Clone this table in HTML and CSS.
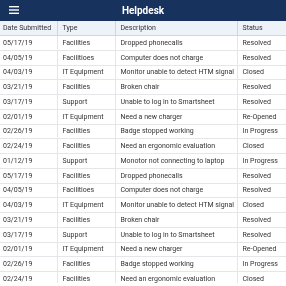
FILE: index.html
```html
<!DOCTYPE html>
<html>
<head>
<meta charset="utf-8">
<link rel="stylesheet" href="styles.css">
</head>
<body>
<div class="app">
  <header class="topbar">
    <span class="menu"><svg width="10" height="8" viewBox="0 0 10 8"><rect x="0" y="0" width="10" height="1.4" fill="#fff"/><rect x="0" y="3.3" width="10" height="1.4" fill="#fff"/><rect x="0" y="6.6" width="10" height="1.4" fill="#fff"/></svg></span>
    <span class="title">Helpdesk</span>
  </header>
  <table class="grid">
    <colgroup><col class="c1"><col class="c2"><col class="c3"><col class="c4"></colgroup>
    <thead>
      <tr><th>Date Submitted</th><th>Type</th><th>Description</th><th>Status</th></tr>
    </thead>
    <tbody>
      <tr><td>05/17/19</td><td>Facilities</td><td>Dropped phonecalls</td><td>Resolved</td></tr>
      <tr><td>04/05/19</td><td>Facilitioes</td><td>Computer does not charge</td><td>Resolved</td></tr>
      <tr><td>04/03/19</td><td>IT Equipment</td><td>Monitor unable to detect HTM signal</td><td>Closed</td></tr>
      <tr><td>03/21/19</td><td>Facilities</td><td>Broken chair</td><td>Resolved</td></tr>
      <tr><td>03/17/19</td><td>Support</td><td>Unable to log in to Smartsheet</td><td>Resolved</td></tr>
      <tr><td>02/01/19</td><td>IT Equipment</td><td>Need a new charger</td><td>Re-Opened</td></tr>
      <tr><td>02/26/19</td><td>Facilities</td><td>Badge stopped working</td><td>In Progress</td></tr>
      <tr><td>02/24/19</td><td>Facilities</td><td>Need an ergonomic evaluation</td><td>Closed</td></tr>
      <tr><td>01/12/19</td><td>Support</td><td>Monotor not connecting to laptop</td><td>In Progress</td></tr>
      <tr><td>05/17/19</td><td>Facilities</td><td>Dropped phonecalls</td><td>Resolved</td></tr>
      <tr><td>04/05/19</td><td>Facilitioes</td><td>Computer does not charge</td><td>Resolved</td></tr>
      <tr><td>04/03/19</td><td>IT Equipment</td><td>Monitor unable to detect HTM signal</td><td>Closed</td></tr>
      <tr><td>03/21/19</td><td>Facilities</td><td>Broken chair</td><td>Resolved</td></tr>
      <tr><td>03/17/19</td><td>Support</td><td>Unable to log in to Smartsheet</td><td>Resolved</td></tr>
      <tr><td>02/01/19</td><td>IT Equipment</td><td>Need a new charger</td><td>Re-Opened</td></tr>
      <tr><td>02/26/19</td><td>Facilities</td><td>Badge stopped working</td><td>In Progress</td></tr>
      <tr><td>02/24/19</td><td>Facilities</td><td>Need an ergonomic evaluation</td><td>Closed</td></tr>
    </tbody>
  </table>
</div>
</body>
</html>
```
FILE: styles.css
```css
html, body { margin: 0; padding: 0; background: #fff; }
body { font-family: Roboto, "Liberation Sans", sans-serif; color: #333333; overflow: hidden; -webkit-font-smoothing: antialiased; }
.app { width: 286px; height: 283px; overflow: hidden; will-change: transform; background: #fff; }
.topbar {
  height: 21px; background: #17335d; display: flex; align-items: center;
  position: relative; justify-content: center;
}
.menu { position: absolute; left: 9px; top: 6px; display: flex; }
.title { color: #ffffff; font-weight: 700; font-size: 10px; }
.grid { width: 286px; border-collapse: collapse; table-layout: fixed; font-size: 7px; color: #333333; }
.c1 { width: 57px; } .c2 { width: 58px; } .c3 { width: 122px; } .c4 { width: 49px; }
.grid th, .grid td {
  text-align: left; font-weight: 400; padding: 0 0 0 5px; white-space: nowrap; overflow: hidden;
  color: #333333;
  border-left: 1px solid #e4e6ea; border-bottom: 1px solid #e4e6ea;
}
.grid th:first-child, .grid td:first-child { border-left: none; padding-left: 3px; }
.grid th { height: 14px; background: #eef3fa; border-left-color: #cdd6e2; border-bottom-color: #cdd6e2; }
.grid td { height: 13.75px; }
```
